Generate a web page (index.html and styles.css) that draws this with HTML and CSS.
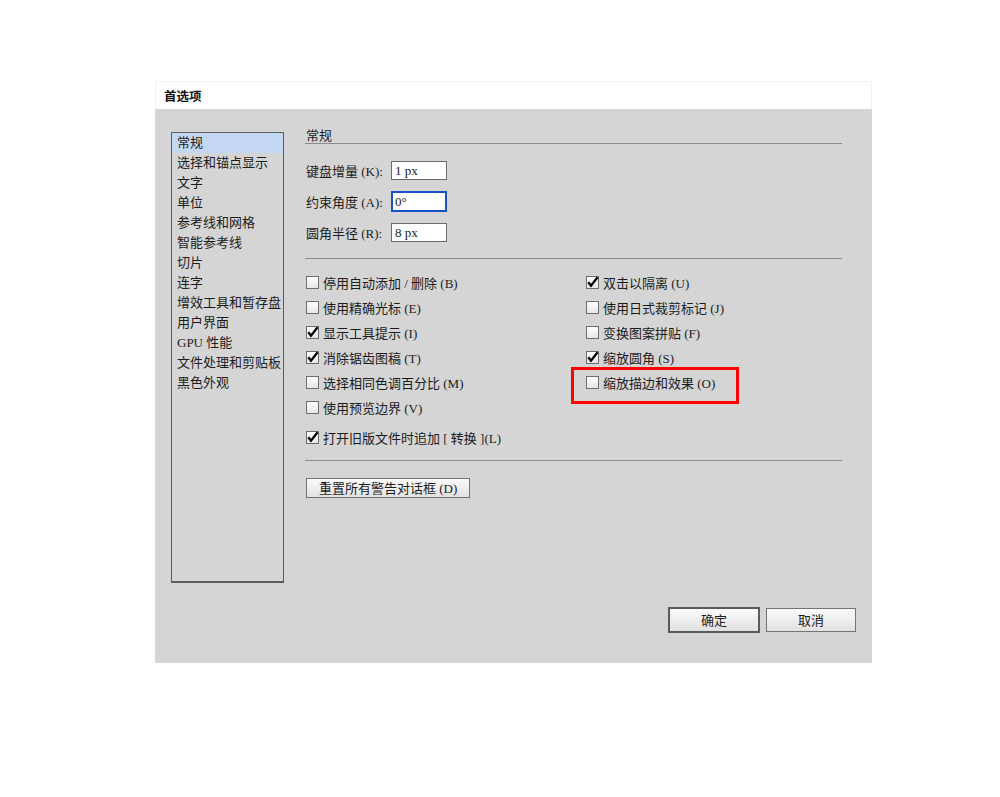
FILE: index.html
```html
<!DOCTYPE html>
<html lang="zh-CN">
<head>
<meta charset="utf-8">
<title>首选项</title>
<link rel="stylesheet" href="styles.css">
</head>
<body>
<div class="dialog">
  <div class="titlebar">首选项</div>
  <div class="dlg-body">
    <div class="main">
      <ul class="sidebar">
        <li class="selected">常规</li>
        <li>选择和锚点显示</li>
        <li>文字</li>
        <li>单位</li>
        <li>参考线和网格</li>
        <li>智能参考线</li>
        <li>切片</li>
        <li>连字</li>
        <li>增效工具和暂存盘</li>
        <li>用户界面</li>
        <li>GPU 性能</li>
        <li>文件处理和剪贴板</li>
        <li>黑色外观</li>
      </ul>
      <div class="content">
        <div class="section-title">常规</div>
        <div class="fields">
          <div class="field"><span class="label">键盘增量 (K):</span><span class="input">1 px</span></div>
          <div class="field"><span class="label">约束角度 (A):</span><span class="input focused">0°</span></div>
          <div class="field"><span class="label">圆角半径 (R):</span><span class="input">8 px</span></div>
        </div>
        <div class="sep"></div>
        <div class="checks">
          <div class="check"><span class="box"></span>停用自动添加 / 删除 (B)</div>
          <div class="check"><span class="box on"><svg viewBox="0 0 13 13"><path d="M2.3 6.2 L5 9.6 L11.6 1.2"/></svg></span>双击以隔离 (U)</div>
          <div class="check"><span class="box"></span>使用精确光标 (E)</div>
          <div class="check"><span class="box"></span>使用日式裁剪标记 (J)</div>
          <div class="check"><span class="box on"><svg viewBox="0 0 13 13"><path d="M2.3 6.2 L5 9.6 L11.6 1.2"/></svg></span>显示工具提示 (I)</div>
          <div class="check"><span class="box"></span>变换图案拼贴 (F)</div>
          <div class="check"><span class="box on"><svg viewBox="0 0 13 13"><path d="M2.3 6.2 L5 9.6 L11.6 1.2"/></svg></span>消除锯齿图稿 (T)</div>
          <div class="check"><span class="box on"><svg viewBox="0 0 13 13"><path d="M2.3 6.2 L5 9.6 L11.6 1.2"/></svg></span>缩放圆角 (S)</div>
          <div class="check"><span class="box"></span>选择相同色调百分比 (M)</div>
          <div class="check highlight"><span class="box"></span>缩放描边和效果 (O)</div>
          <div class="check"><span class="box"></span>使用预览边界 (V)</div>
          <div class="check"></div>
          <div class="check wide"><span class="box on"><svg viewBox="0 0 13 13"><path d="M2.3 6.2 L5 9.6 L11.6 1.2"/></svg></span>打开旧版文件时追加 [ 转换 ](L)</div>
        </div>
        <div class="sep sep2"></div>
        <button class="btn reset">重置所有警告对话框 (D)</button>
      </div>
    </div>
    <div class="footer">
      <button class="btn ok">确定</button>
      <button class="btn cancel">取消</button>
    </div>
  </div>
</div>
</body>
</html>
```
FILE: styles.css
```css
* { box-sizing: border-box; }
html, body { margin: 0; padding: 0; background: #ffffff; }
body {
  font-family: "Liberation Serif", "Noto Sans CJK SC", serif;
  font-size: 13px;
  color: #1c1c1c;
}
.dialog {
  margin: 81px 0 0 155px;
  width: 717px;
}
.titlebar {
  height: 28px;
  background: #ffffff;
  border: 1px solid #f0f0f0;
  border-bottom: none;
  padding-left: 8px;
  display: flex;
  align-items: center;
  font-family: "Noto Sans CJK SC", sans-serif;
  font-weight: 700;
  font-size: 12.5px;
  color: #111;
}
.dlg-body {
  background: #d5d5d5;
  height: 554px;
  display: flex;
  flex-direction: column;
}
.main {
  display: flex;
  padding: 20px 0 0 16px;
  height: 474px;
}
.sidebar {
  list-style: none;
  margin: 3px 0 0 0;
  padding: 0;
  width: 113px;
  height: 451px;
  border: 1px solid #5c5c5c;
  border-bottom-width: 2px;
}
.sidebar li {
  height: 20px;
  line-height: 20px;
  padding-left: 5px;
  white-space: nowrap;
}
.sidebar li.selected { background: #c3d7f2; }
.content {
  margin-left: 21px;
  width: 537px;
}
.section-title {
  height: 15px;
  line-height: 14px;
  padding-left: 1px;
  border-bottom: 1px solid #8c8c8c;
}
.fields { margin-top: 11px; }
.field {
  height: 31px;
  display: flex;
  align-items: center;
  padding-left: 1px;
}
.label { width: 85px; white-space: nowrap; }
.input {
  width: 56px;
  height: 19px;
  background: #ffffff;
  border: 1px solid #6a6a6a;
  padding-left: 3px;
  line-height: 17px;
  font-size: 13px;
}
.input.focused {
  height: 21px;
  border: 2px solid #1a52c9;
  padding-left: 2px;
}
.sep {
  height: 1px;
  background: #8c8c8c;
  margin-top: 10px;
}
.checks {
  margin-top: 11px;
  display: grid;
  grid-template-columns: 280px 1fr;
  grid-template-rows: repeat(6, 25px) 30px;
}
.check {
  display: flex;
  align-items: center;
  padding-left: 1px;
  white-space: nowrap;
  position: relative;
}
.check.wide { grid-column: 1 / 3; padding-top: 5px; }
.box {
  width: 13px;
  height: 13px;
  border: 1px solid #6e6e6e;
  background: linear-gradient(#ffffff, #e6e6e6);
  margin-right: 4px;
  flex: none;
  position: relative;
}
.box svg {
  position: absolute;
  left: -1px;
  top: -1px;
  width: 13px;
  height: 13px;
  overflow: visible;
}
.box svg path {
  fill: none;
  stroke: #000;
  stroke-width: 2.3;
  stroke-linejoin: miter;
  stroke-linecap: butt;
}
.check.highlight::after {
  content: "";
  position: absolute;
  left: -14px;
  top: -3px;
  width: 162px;
  height: 31px;
  border: 3px solid #ff0000;
}
.sep2 { margin-top: 10px; }
.btn {
  font-family: "Liberation Serif", "Noto Sans CJK SC", serif;
  font-size: 13px;
  color: #1c1c1c;
  background: linear-gradient(#fbfbfb, #e1e1e1);
  border: 1px solid #747474;
  border-radius: 0;
  padding: 0;
  margin: 0;
  line-height: 1;
}
.reset {
  display: block;
  margin-top: 17px;
  width: 164px;
  height: 20px;
  text-align: left;
  padding-left: 12px;
  margin-left: 1px;
}
.footer {
  display: flex;
  justify-content: flex-end;
  align-items: center;
  gap: 6px;
  padding-right: 16px;
  margin-top: 24px;
  height: 26px;
}
.ok {
  width: 92px;
  height: 26px;
  border: 2px solid #5a5a5a;
}
.cancel {
  width: 90px;
  height: 24px;
}
```
